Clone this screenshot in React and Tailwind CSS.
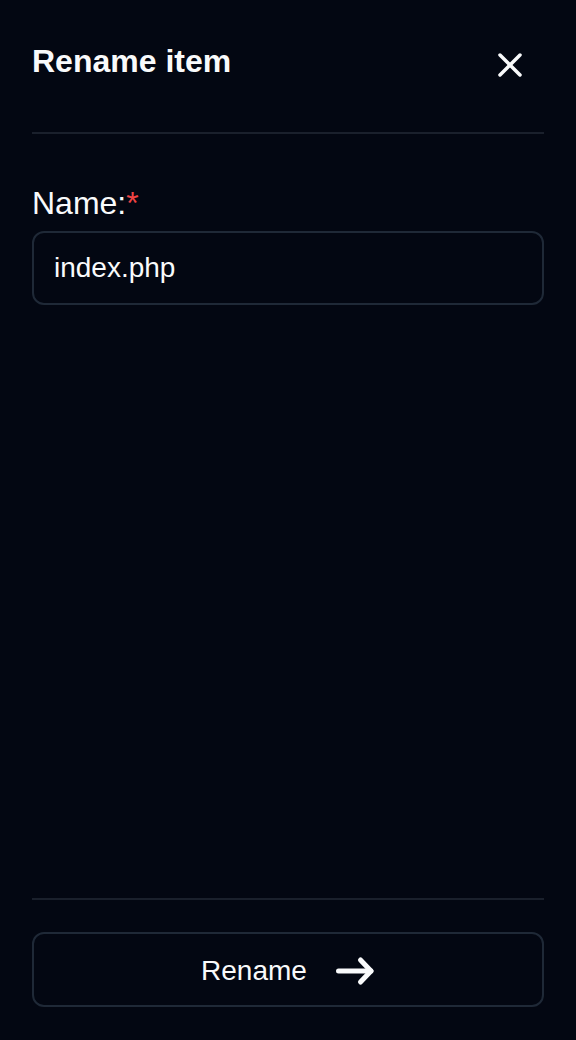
import React from "react";

export default function App() {
  return (
    <div
      className="w-full h-[1040px] bg-[#030712] text-[#f9fafb] flex flex-col px-8"
      style={{ fontFamily: '"Liberation Sans", Arial, sans-serif' }}
    >
      <div className="h-[132px] pt-[45px] flex items-start justify-between">
        <h1 className="text-[32px] leading-[32px] font-bold">Rename item</h1>
        <button className="mt-[8px] mr-[22px] w-6 h-6 text-[#f9fafb]" aria-label="Close">
          <svg width="24" height="24" viewBox="0 0 24 24" fill="none" stroke="currentColor" strokeWidth="3.5" strokeLinecap="round">
            <path d="M2 2 22 22" />
            <path d="M22 2 2 22" />
          </svg>
        </button>
      </div>
      <div className="h-[2px] bg-[#1a202c]" />

      <label className="mt-[53px] text-[32px] leading-[32px] block">
        Name:<span className="text-[#ef4444]">*</span>
      </label>
      <input
        className="mt-3 h-[74px] w-full rounded-[12px] border-2 border-[#1f2937] bg-transparent px-5 text-[28px] text-[#f9fafb] outline-none"
        style={{ fontFamily: '"Liberation Sans", Arial, sans-serif' }}
        defaultValue="index.php"
      />

      <div className="flex-1" />

      <div className="h-[2px] bg-[#1a202c]" />
      <div className="pt-8 pb-[33px]">
        <button className="h-[75px] pt-[2px] w-full rounded-[12px] border-2 border-[#1f2937] flex items-center justify-center gap-[28px] text-[28px] text-[#f9fafb]">
          <span>Rename</span>
          <svg width="40" height="30" viewBox="0 0 40 30" fill="none" stroke="currentColor" strokeWidth="5" strokeLinecap="round" strokeLinejoin="round">
            <path d="M3.5 15H36" />
            <path d="M25.5 4 36 15 25.5 26" />
          </svg>
        </button>
      </div>
    </div>
  );
}
